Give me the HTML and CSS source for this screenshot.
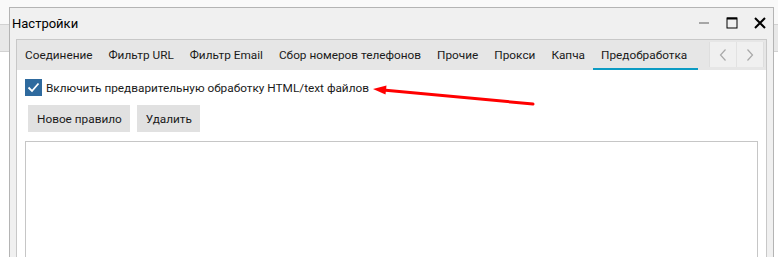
FILE: index.html
```html
<!DOCTYPE html>
<html lang="ru">
<head>
    <meta charset="UTF-8">
    <meta name="viewport" content="width=device-width, initial-scale=1.0">
    <title>Настройки</title>
    <link rel="stylesheet" href="styles.css">
</head>
<body>
    <div class="window">
        <div class="titlebar">
            <span class="title">Настройки</span>
            <div class="window-buttons">
                <svg class="wb-min" width="12" height="12" viewBox="0 0 12 12"><line x1="1" y1="6" x2="11" y2="6" stroke="#a6a6a6" stroke-width="2"/></svg>
                <svg class="wb-max" width="12" height="12" viewBox="0 0 12 12"><rect x="1" y="1" width="10" height="10" fill="none" stroke="#000" stroke-width="1"/><line x1="1" y1="1.5" x2="11" y2="1.5" stroke="#000" stroke-width="2"/></svg>
                <svg class="wb-close" width="12" height="12" viewBox="0 0 12 12"><path d="M1 1 L11 11 M11 1 L1 11" stroke="#000" stroke-width="2"/></svg>
            </div>
        </div>
        <div class="window-body">
            <div class="tabs">
                <div class="tab-strip">
                    <div class="tab">Соединение</div>
                    <div class="tab">Фильтр URL</div>
                    <div class="tab">Фильтр Email</div>
                    <div class="tab">Сбор номеров телефонов</div>
                    <div class="tab">Прочие</div>
                    <div class="tab">Прокси</div>
                    <div class="tab">Капча</div>
                    <div class="tab active">Предобработка</div>
                    <div class="tab-scroll">
                        <div class="scroll-btn"><svg width="8" height="12" viewBox="0 0 8 12"><path d="M6.5 0.5 L1.5 6 L6.5 11.5" fill="none" stroke="#a8a8a8" stroke-width="1.2"/></svg></div>
                        <div class="scroll-btn"><svg width="8" height="12" viewBox="0 0 8 12"><path d="M1.5 0.5 L6.5 6 L1.5 11.5" fill="none" stroke="#a8a8a8" stroke-width="1.2"/></svg></div>
                    </div>
                </div>
                <div class="tab-page">
                    <label class="check-row">
                        <span class="checkbox"><svg width="17" height="17" viewBox="0 0 17 17"><path d="M3.5 8.5 L7 12 L13.5 4.5" fill="none" stroke="#fff" stroke-width="1.8"/></svg></span>
                        <span>Включить предварительную обработку HTML/text файлов</span>
                    </label>
                    <div class="toolbar">
                        <button class="btn">Новое правило</button>
                        <button class="btn">Удалить</button>
                    </div>
                    <div class="rules-list"></div>
                    <!-- annotation arrow pointing at the checkbox label -->
                    <svg class="annotation" width="540" height="50" viewBox="0 0 540 50">
                        <line x1="516" y1="34" x2="366" y2="20" stroke="#ff0000" stroke-width="3" stroke-linecap="round"/>
                        <polygon points="356,19 369.5,15.5 368.5,24.5" fill="#ff0000"/>
                    </svg>
                </div>
            </div>
        </div>
    </div>
</body>
</html>
```

FILE: styles.css
```css
html, body {
    margin: 0;
    height: 100%;
    overflow: hidden;
}
body {
    background: linear-gradient(to bottom, #f9f9f9 0 24px, #d2d2d2 24px 25px, #e8e8e8 25px 51px, #d2d2d2 51px 52px, #ffffff 52px);
    font-family: Roboto, 'Noto Sans', sans-serif;
    font-size: 11.8px;
    color: #1a1a1a;
}
.window {
    margin: 7px 0 0 9px;
    width: 763px;
    height: 300px;
    border: 1px solid #b4b4b4;
    background-color: #f0f0f0;
    display: flex;
    flex-direction: column;
}
.titlebar {
    flex-shrink: 0;
    height: 30px;
    display: flex;
    align-items: center;
    padding-left: 2px;
}
.title {
    font-size: 13px;
    color: #000;
}
.window-buttons {
    margin-left: auto;
    display: flex;
    align-items: center;
    gap: 16px;
    padding-right: 7px;
}
.window-buttons svg {
    display: block;
}
.window-body {
    flex: 1;
    padding: 1px 6px 0 6px;
    display: flex;
    flex-direction: column;
}
.tabs {
    flex: 1;
    min-width: 0;
    border: 1px solid #c8c8c8;
    display: flex;
    flex-direction: column;
}
.tab-strip {
    flex-shrink: 0;
    height: 30px;
    background-color: #e6e6e6;
    display: flex;
    align-items: stretch;
}
.tab {
    flex-shrink: 0;
    padding: 2px 8px 0 8px;
    display: flex;
    align-items: center;
    white-space: nowrap;
    box-sizing: border-box;
    border-bottom: 2px solid transparent;
}
.tab.active {
    border-bottom-color: #0c9bc3;
    padding-right: 11px;
}
.tab-scroll {
    flex-shrink: 0;
    margin-left: auto;
    margin-right: 2px;
    display: flex;
    align-self: flex-start;
    margin-top: 2px;
    height: 25px;
    border-left: 1px solid #dedede;
    border-right: 1px solid #dedede;
    background-color: #f0f0f0;
}
.scroll-btn {
    width: 26px;
    display: flex;
    align-items: center;
    justify-content: center;
}
.scroll-btn + .scroll-btn {
    border-left: 1px solid #e2e2e2;
}
.tab-page {
    position: relative;
    flex: 1;
    background-color: #ffffff;
    padding: 9px 8px 0 8px;
}
.check-row {
    display: flex;
    align-items: center;
    gap: 4px;
    height: 17px;
}
.checkbox {
    width: 17px;
    height: 17px;
    background-color: #2e6a9e;
    display: block;
}
.checkbox svg {
    display: block;
}
.toolbar {
    display: flex;
    gap: 7px;
    margin-top: 9px;
    padding-left: 3px;
}
.btn {
    height: 27px;
    padding: 0 8px 0 9px;
    border: none;
    background-color: #e1e1e1;
    font-family: inherit;
    font-size: 11.8px;
    color: #1a1a1a;
}
.rules-list {
    margin-top: 9px;
    height: 200px;
    border: 1px solid #c6c6c6;
    background-color: #ffffff;
}
.annotation {
    position: absolute;
    left: 0;
    top: 0;
    pointer-events: none;
}
```
